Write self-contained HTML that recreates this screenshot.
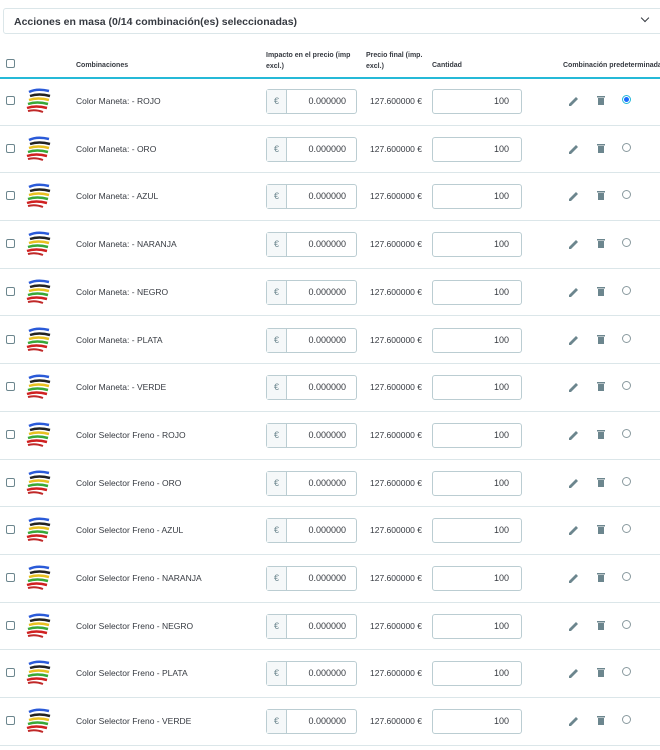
<!DOCTYPE html>
<html><head><meta charset="utf-8"><style>
*{box-sizing:border-box;margin:0;padding:0}
body{width:660px;height:750px;background:#fff;font-family:"Liberation Sans",sans-serif;color:#363a41;position:relative;overflow:hidden}
.bulk{position:absolute;left:3px;top:8px;width:660px;height:26px;border:1px solid #dbe6e9;border-radius:3px;font-size:10.5px;font-weight:bold;padding:7px 10px}
.chev{position:absolute;left:642px;top:15px;width:6px;height:6px;border-right:1.5px solid #363a41;border-bottom:1.5px solid #363a41;transform:rotate(45deg)}
.hd{position:absolute;font-size:7px;font-weight:bold;line-height:11px}
.hline{position:absolute;left:0;top:77px;width:660px;height:1.5px;background:#25b9d7}
.row{position:absolute;left:0;width:660px;height:47.7px;border-bottom:1px solid #dbe6e9}
.cb{position:absolute;left:6px;top:18px;width:9px;height:9px;border:1px solid #6c868e;border-radius:2px;background:#fff}
.img{position:absolute;left:25px;top:10px}
.nm{position:absolute;left:76px;top:18px;font-size:8.5px}
.ig{position:absolute;left:266px;top:11px;width:91px;height:25px;border:1px solid #bbcdd2;border-radius:3px;font-size:9px}
.ig .a{position:absolute;left:0;top:0;width:20px;height:23px;background:#f5f8f9;border-right:1px solid #bbcdd2;color:#6c868e;text-align:center;line-height:23px}
.ig .v{position:absolute;right:10px;top:6px}
.pr{position:absolute;left:370px;top:18px;font-size:8.5px}
.q{position:absolute;left:432px;top:11px;width:90px;height:25px;border:1px solid #bbcdd2;border-radius:3px;font-size:9px;text-align:right;padding:6px 12px 0 0}
.pen{position:absolute;left:568px;top:17px}
.tr{position:absolute;left:597px;top:18px;width:8px;height:9px}
.rd{position:absolute;left:622px;top:17px;width:9px;height:9px;border:1px solid #8a9a9f;border-radius:50%}
.rd.on{border-color:#25b9d7;background:radial-gradient(circle,#1a6cff 45%,#fff 55%)}
</style></head><body>
<div class="bulk">Acciones en masa (0/14 combinación(es) seleccionadas)</div><div class="chev"></div>
<div class="cb" style="top:59px"></div>
<div class="hd" style="left:76px;top:60px">Combinaciones</div>
<div class="hd" style="left:266px;top:50px">Impacto en el precio (imp<br>excl.)</div>
<div class="hd" style="left:366px;top:50px">Precio final (imp.<br>excl.)</div>
<div class="hd" style="left:432px;top:60px">Cantidad</div>
<div class="hd" style="left:563px;top:60px;white-space:nowrap">Combinación predeterminada</div>
<div class="hline"></div>
<svg width="0" height="0" style="position:absolute"><defs>
<g id="im"><path d="M4 4 Q12 0 24 3" stroke="#2a5ad8" stroke-width="2.5" fill="none"/><path d="M5 8 Q14 5 25 8" stroke="#222" stroke-width="2.5" fill="none"/><path d="M4 12 Q13 9 24 12" stroke="#e8c020" stroke-width="2.5" fill="none"/><path d="M3 16 Q12 13 23 16" stroke="#38a838" stroke-width="2.5" fill="none"/><path d="M2 20 Q11 17 22 20" stroke="#d02020" stroke-width="2.5" fill="none"/><path d="M3 23 Q10 21 18 24" stroke="#c02828" stroke-width="2" fill="none"/></g>
<g id="pn"><path d="M1 11 L1 9 L8 2 L10 4 L3 11 Z" fill="#6c868e"/></g>
<g id="tc"><rect x="0" y="0" width="8" height="1.5" fill="#6c868e"/><rect x="1" y="2" width="6" height="7" fill="#6c868e"/></g>
</defs></svg>
<div class="row" style="top:78px"><div class="cb"></div><svg class="img" width="30" height="28"><use href="#im"/></svg><div class="nm">Color Maneta: - ROJO</div><div class="ig"><div class="a">€</div><div class="v">0.000000</div></div><div class="pr">127.600000 €</div><div class="q">100</div><svg class="pen" width="12" height="12"><use href="#pn"/></svg><svg class="tr"><use href="#tc"/></svg><div class="rd on"></div></div>
<div class="row" style="top:125.7px"><div class="cb"></div><svg class="img" width="30" height="28"><use href="#im"/></svg><div class="nm">Color Maneta: - ORO</div><div class="ig"><div class="a">€</div><div class="v">0.000000</div></div><div class="pr">127.600000 €</div><div class="q">100</div><svg class="pen" width="12" height="12"><use href="#pn"/></svg><svg class="tr"><use href="#tc"/></svg><div class="rd"></div></div>
<div class="row" style="top:173.4px"><div class="cb"></div><svg class="img" width="30" height="28"><use href="#im"/></svg><div class="nm">Color Maneta: - AZUL</div><div class="ig"><div class="a">€</div><div class="v">0.000000</div></div><div class="pr">127.600000 €</div><div class="q">100</div><svg class="pen" width="12" height="12"><use href="#pn"/></svg><svg class="tr"><use href="#tc"/></svg><div class="rd"></div></div>
<div class="row" style="top:221.1px"><div class="cb"></div><svg class="img" width="30" height="28"><use href="#im"/></svg><div class="nm">Color Maneta: - NARANJA</div><div class="ig"><div class="a">€</div><div class="v">0.000000</div></div><div class="pr">127.600000 €</div><div class="q">100</div><svg class="pen" width="12" height="12"><use href="#pn"/></svg><svg class="tr"><use href="#tc"/></svg><div class="rd"></div></div>
<div class="row" style="top:268.8px"><div class="cb"></div><svg class="img" width="30" height="28"><use href="#im"/></svg><div class="nm">Color Maneta: - NEGRO</div><div class="ig"><div class="a">€</div><div class="v">0.000000</div></div><div class="pr">127.600000 €</div><div class="q">100</div><svg class="pen" width="12" height="12"><use href="#pn"/></svg><svg class="tr"><use href="#tc"/></svg><div class="rd"></div></div>
<div class="row" style="top:316.5px"><div class="cb"></div><svg class="img" width="30" height="28"><use href="#im"/></svg><div class="nm">Color Maneta: - PLATA</div><div class="ig"><div class="a">€</div><div class="v">0.000000</div></div><div class="pr">127.600000 €</div><div class="q">100</div><svg class="pen" width="12" height="12"><use href="#pn"/></svg><svg class="tr"><use href="#tc"/></svg><div class="rd"></div></div>
<div class="row" style="top:364.2px"><div class="cb"></div><svg class="img" width="30" height="28"><use href="#im"/></svg><div class="nm">Color Maneta: - VERDE</div><div class="ig"><div class="a">€</div><div class="v">0.000000</div></div><div class="pr">127.600000 €</div><div class="q">100</div><svg class="pen" width="12" height="12"><use href="#pn"/></svg><svg class="tr"><use href="#tc"/></svg><div class="rd"></div></div>
<div class="row" style="top:411.9px"><div class="cb"></div><svg class="img" width="30" height="28"><use href="#im"/></svg><div class="nm">Color Selector Freno - ROJO</div><div class="ig"><div class="a">€</div><div class="v">0.000000</div></div><div class="pr">127.600000 €</div><div class="q">100</div><svg class="pen" width="12" height="12"><use href="#pn"/></svg><svg class="tr"><use href="#tc"/></svg><div class="rd"></div></div>
<div class="row" style="top:459.6px"><div class="cb"></div><svg class="img" width="30" height="28"><use href="#im"/></svg><div class="nm">Color Selector Freno - ORO</div><div class="ig"><div class="a">€</div><div class="v">0.000000</div></div><div class="pr">127.600000 €</div><div class="q">100</div><svg class="pen" width="12" height="12"><use href="#pn"/></svg><svg class="tr"><use href="#tc"/></svg><div class="rd"></div></div>
<div class="row" style="top:507.3px"><div class="cb"></div><svg class="img" width="30" height="28"><use href="#im"/></svg><div class="nm">Color Selector Freno - AZUL</div><div class="ig"><div class="a">€</div><div class="v">0.000000</div></div><div class="pr">127.600000 €</div><div class="q">100</div><svg class="pen" width="12" height="12"><use href="#pn"/></svg><svg class="tr"><use href="#tc"/></svg><div class="rd"></div></div>
<div class="row" style="top:555px"><div class="cb"></div><svg class="img" width="30" height="28"><use href="#im"/></svg><div class="nm">Color Selector Freno - NARANJA</div><div class="ig"><div class="a">€</div><div class="v">0.000000</div></div><div class="pr">127.600000 €</div><div class="q">100</div><svg class="pen" width="12" height="12"><use href="#pn"/></svg><svg class="tr"><use href="#tc"/></svg><div class="rd"></div></div>
<div class="row" style="top:602.7px"><div class="cb"></div><svg class="img" width="30" height="28"><use href="#im"/></svg><div class="nm">Color Selector Freno - NEGRO</div><div class="ig"><div class="a">€</div><div class="v">0.000000</div></div><div class="pr">127.600000 €</div><div class="q">100</div><svg class="pen" width="12" height="12"><use href="#pn"/></svg><svg class="tr"><use href="#tc"/></svg><div class="rd"></div></div>
<div class="row" style="top:650.4px"><div class="cb"></div><svg class="img" width="30" height="28"><use href="#im"/></svg><div class="nm">Color Selector Freno - PLATA</div><div class="ig"><div class="a">€</div><div class="v">0.000000</div></div><div class="pr">127.600000 €</div><div class="q">100</div><svg class="pen" width="12" height="12"><use href="#pn"/></svg><svg class="tr"><use href="#tc"/></svg><div class="rd"></div></div>
<div class="row" style="top:698.1px"><div class="cb"></div><svg class="img" width="30" height="28"><use href="#im"/></svg><div class="nm">Color Selector Freno - VERDE</div><div class="ig"><div class="a">€</div><div class="v">0.000000</div></div><div class="pr">127.600000 €</div><div class="q">100</div><svg class="pen" width="12" height="12"><use href="#pn"/></svg><svg class="tr"><use href="#tc"/></svg><div class="rd"></div></div>
</body></html>
